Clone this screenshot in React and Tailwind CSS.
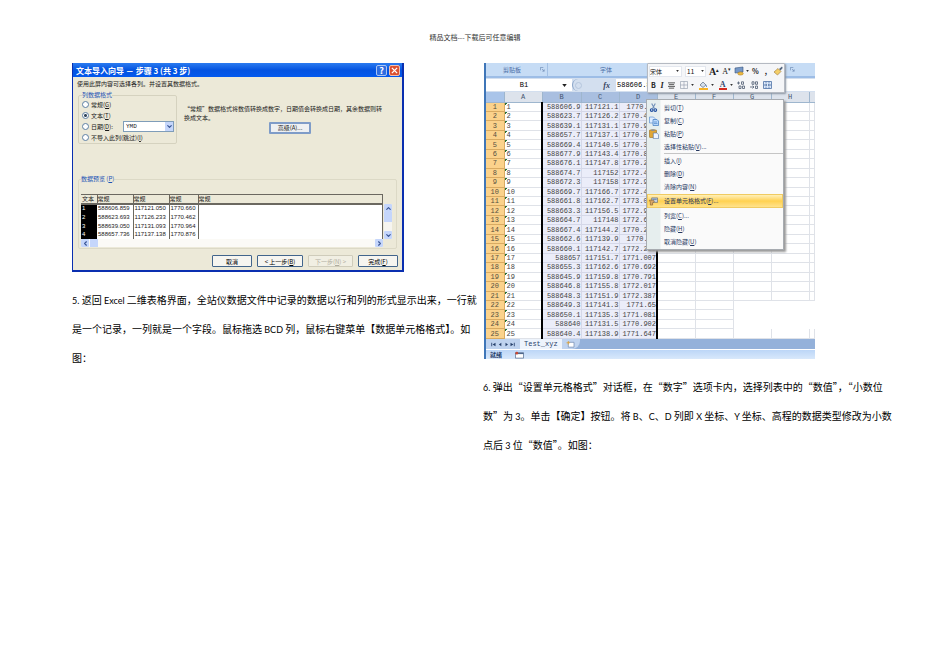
import { ChevronDown, ChevronLeft, ChevronRight, ChevronUp } from "lucide-react";

const SHEET_ROWS = [
  ["588606.9", "117121.1", "1770.66"],
  ["588623.7", "117126.2", "1770.462"],
  ["588639.1", "117131.1", "1770.964"],
  ["588657.7", "117137.1", "1770.876"],
  ["588669.4", "117140.5", "1770.325"],
  ["588677.9", "117143.4", "1770.811"],
  ["588676.1", "117147.8", "1770.256"],
  ["588674.7", "117152", "1772.417"],
  ["588672.3", "117158", "1772.932"],
  ["588669.7", "117166.7", "1772.408"],
  ["588661.8", "117162.7", "1773.051"],
  ["588663.3", "117156.5", "1772.914"],
  ["588664.7", "117148", "1772.637"],
  ["588667.4", "117144.2", "1770.218"],
  ["588662.6", "117139.9", "1770.35"],
  ["588660.1", "117142.7", "1772.266"],
  ["588657", "117151.7", "1771.007"],
  ["588655.3", "117162.6", "1770.692"],
  ["588645.9", "117159.8", "1770.791"],
  ["588646.8", "117155.8", "1772.017"],
  ["588648.3", "117151.9", "1772.387"],
  ["588649.3", "117141.3", "1771.65"],
  ["588650.1", "117135.3", "1771.081"],
  ["588640", "117131.5", "1770.902"],
  ["588640.4", "117138.9", "1771.647"],
];

const PREVIEW_ROWS = [
  ["588606.859", "117121.050", "1770.660"],
  ["588623.693", "117126.233", "1770.462"],
  ["588639.050", "117131.093", "1770.964"],
  ["588657.736", "117137.138", "1770.876"],
];

const MENU_ITEMS = [
  { label: "剪切", hotkey: "T", icon: "cut" },
  { label: "复制", hotkey: "C", icon: "copy" },
  { label: "粘贴", hotkey: "P", icon: "paste" },
  { label: "选择性粘贴", hotkey: "V", more: true },
  { label: "插入", hotkey: "I", divider: true },
  { label: "删除", hotkey: "D" },
  { label: "清除内容", hotkey: "N" },
  { label: "设置单元格格式", hotkey: "F", more: true, icon: "format", active: true },
  { label: "列宽", hotkey: "C", more: true },
  { label: "隐藏", hotkey: "H" },
  { label: "取消隐藏", hotkey: "U" },
];

function Latin({ children }) {
  return <span className="font-[Lato,sans-serif] text-[9px]">{children}</span>;
}

function Hotkey({ children }) {
  return (
    <span>
      (<u>{children}</u>)
    </span>
  );
}

function MenuIcon({ name }) {
  if (name === "cut") {
    return (
      <svg viewBox="0 0 10 10" className="size-[9px]" fill="none">
        <path d="M3 .5 6 6.2M7 .5 4 6.2" stroke="#6f8fb8" strokeWidth="1.2" />
        <circle cx="3" cy="7.8" r="1.5" stroke="#1f4fa0" strokeWidth="1.2" />
        <circle cx="7" cy="7.8" r="1.5" stroke="#1f4fa0" strokeWidth="1.2" />
      </svg>
    );
  }
  if (name === "copy") {
    return (
      <svg viewBox="0 0 10 10" className="size-[10px]">
        <path d="M.5 1h4l1.5 1.5V7H.5z" fill="#dcecff" stroke="#5b8fd0" strokeWidth=".7" />
        <path d="M4 3.5h4L9.500 5v4.500H4z" fill="#b9d8fb" stroke="#3c78c0" strokeWidth=".7" />
        <path d="M5 6h3M5 7.500h3.500" stroke="#3c78c0" strokeWidth=".6" />
      </svg>
    );
  }
  if (name === "paste") {
    return (
      <svg viewBox="0 0 10 10" className="size-[10px]">
        <rect x=".5" y="1" width="7" height="7.500" rx=".6" fill="#e0a637" stroke="#9a6b1c" strokeWidth=".6" />
        <rect x="2.300" y=".3" width="3.400" height="1.700" fill="#8d8d8d" />
        <path d="M4.300 4h3.500L9.500 5.600v4H4.300z" fill="#eef4ff" stroke="#4d6fa5" strokeWidth=".6" />
      </svg>
    );
  }
  if (name === "format") {
    return (
      <svg viewBox="0 0 10 10" className="size-[9px]">
        <path d="M3 1h6.500v5H3z" fill="#c7d3e3" stroke="#5b6470" strokeWidth=".7" />
        <path d="M4 2.500h4.500" stroke="#54779f" strokeWidth="1" />
        <path d="M.5 3.500h4.500L6 5 4 6.500V9H1.500V6z" fill="#d9a765" stroke="#755028" strokeWidth=".6" />
      </svg>
    );
  }
  return null;
}

function RadioRow({ id, label, hotkey, suffix, defaultChecked }) {
  return (
    <div className="flex h-[11px] items-center gap-[2px]">
      <input
        id={id}
        type="radio"
        name="column-format"
        defaultChecked={defaultChecked}
        className="size-[7px] shrink-0 appearance-none rounded-full border border-[#5d7fa3] bg-white checked:bg-[radial-gradient(circle,#33475c_0_1px,#fff_2px)]"
      />
      <label htmlFor={id} className="whitespace-nowrap">
        {label}
        <Hotkey>{hotkey}</Hotkey>
        {suffix}
      </label>
    </div>
  );
}

function ScrollButton({ label, children }) {
  return (
    <button
      type="button"
      aria-label={label}
      className="flex size-[8px] items-center justify-center rounded-[1px] bg-[#c5d6fb] text-[#3a5694]"
    >
      {children}
    </button>
  );
}

function DialogButton({ disabled, className, children }) {
  const tone = disabled
    ? "border-[#cfccbb] bg-[#f1efe3] text-[#b0ad9e]"
    : "border-[#42658c] bg-[#f6f5f0] text-black";
  return (
    <button
      type="button"
      disabled={disabled}
      className={`h-[12px] whitespace-nowrap rounded-[1px] border leading-[9px] ${tone} ${className}`}
    >
      {children}
    </button>
  );
}

function ImportWizard() {
  return (
    <section className="w-full max-w-[332px] border-b-2 border-l border-r-2 border-[#0a2fb0] bg-[#ece9d8] font-['Noto_Sans_CJK_SC',sans-serif] text-[6px] leading-[7px] text-[#1a1a1a]">
      <header className="flex h-[14px] items-center justify-between bg-linear-to-b from-[#2a7bf0] via-[#0453e0] to-[#0359ee] pl-[3px] pr-[2px] text-white">
        <h2 className="text-[8px] font-bold">文本导入向导 － 步骤 3 (共 3 步)</h2>
        <div className="flex gap-[2px]">
          <button type="button" aria-label="帮助" className="flex size-[11px] items-center justify-center rounded-[2px] border border-[#a9c5f5] bg-[#2f6de0] text-[9px] font-bold">
            ?
          </button>
          <button type="button" aria-label="关闭" className="flex size-[11px] items-center justify-center rounded-[2px] border border-[#f0c0b0] bg-[#dc5030]">
            <svg viewBox="0 0 8 8" className="size-[7px]" stroke="white" strokeWidth="1.500">
              <path d="M1 1l6 6M7 1L1 7" />
            </svg>
          </button>
        </div>
      </header>

      <p className="px-[4px] pt-[3px] pb-[4px]">使用此屏内容可选择各列。并设置其数据格式。</p>

      <div className="flex gap-[7px] pl-[5px]">
        <fieldset className="w-[99px] shrink-0 rounded-[2px] border border-[#d5d2bf] pl-[3px]">
          <legend className="leading-[8px] text-[#1c53b5]">列数据格式</legend>
          <RadioRow id="fmt-general" label="常规" hotkey="G" />
          <RadioRow id="fmt-text" label="文本" hotkey="T" defaultChecked />
          <div className="flex items-center justify-between pr-[2px]">
            <RadioRow id="fmt-date" label="日期" hotkey="D" suffix=":" />
            <div className="relative">
              <select
                aria-label="日期格式"
                className="block h-[11px] w-[51px] appearance-none border border-[#7f9db9] bg-white pl-[2px] font-['Liberation_Mono',monospace] text-[6px] leading-[9px]"
              >
                <option>YMD</option>
              </select>
              <span className="pointer-events-none absolute top-px right-px flex h-[9px] w-[8px] items-center justify-center bg-[#c5d6fb] text-[#3a5694]">
                <ChevronDown className="size-[7px]" strokeWidth={4} />
              </span>
            </div>
          </div>
          <RadioRow id="fmt-skip" label="不导入此列(跳过)" hotkey="I" />
        </fieldset>
        <div className="pt-[13px]">
          <p className="leading-[9px]">
            “常规”数据格式将数值转换成数字，日期值会转换成日期，其余数据则转
            <br />
            换成文本。
          </p>
          <button type="button" className="ml-[85px] block h-[12px] w-[42px] rounded-[1px] border-2 border-[#7f9cc8] bg-[#eef0f2] leading-[8px]">
            高级(A)...
          </button>
        </div>
      </div>

      <fieldset className="mx-[5px] mt-[31px] rounded-[2px] border border-[#dcd9c6] px-[2px] pb-[1px]">
        <legend className="leading-[8px] text-[#1c53b5]">
          数据预览 <Hotkey>P</Hotkey>
        </legend>
        <div className="mt-[11px] flex">
          <table className="h-[45px] flex-1 table-fixed border-collapse border-r border-[#6b6860] bg-white text-left">
            <colgroup>
              <col className="w-[16px]" />
              <col className="w-[36px]" />
              <col className="w-[36px]" />
              <col className="w-[29px]" />
              <col />
            </colgroup>
            <thead>
              <tr className="h-[9px] border-t border-b-2 border-[#6b6860] bg-[#ece9d8]">
                <th className="p-0 pl-px font-normal">文本</th>
                <th className="border-l border-[#6b6860] p-0 font-normal">常规</th>
                <th className="border-l border-[#6b6860] p-0 font-normal">常规</th>
                <th className="border-l border-[#6b6860] p-0 font-normal">常规</th>
                <th className="border-l border-[#6b6860] p-0 font-normal">常规</th>
              </tr>
            </thead>
            <tbody className="font-['Liberation_Sans',sans-serif]">
              {PREVIEW_ROWS.map((row, i) => (
                <tr key={row[0]}>
                  <td className="bg-black p-0 pl-px text-white">{i + 1}</td>
                  {row.map((value) => (
                    <td key={value} className="border-r border-[#6b6860] p-0 pl-px">
                      {value}
                    </td>
                  ))}
                  <td className="p-0" />
                </tr>
              ))}
            </tbody>
          </table>
          <div className="mt-[10px] mr-[2px] ml-px flex flex-col justify-between bg-[#f6f5f0]">
            <ScrollButton label="向上">
              <ChevronUp className="size-[7px]" strokeWidth={4} />
            </ScrollButton>
            <div className="mb-auto h-[10px] w-[8px] bg-[#c5d6fb]" />
            <ScrollButton label="向下">
              <ChevronDown className="size-[7px]" strokeWidth={4} />
            </ScrollButton>
          </div>
        </div>
        <div className="mr-[11px] flex bg-[#fbfaf6]">
          <ScrollButton label="向左">
            <ChevronLeft className="size-[7px]" strokeWidth={4} />
          </ScrollButton>
          <div className="mr-auto ml-px size-[8px] bg-[#c5d6fb]" />
          <ScrollButton label="向右">
            <ChevronRight className="size-[7px]" strokeWidth={4} />
          </ScrollButton>
        </div>
      </fieldset>

      <footer className="flex justify-end gap-[5px] px-[4px] pt-[6px] pb-[3px]">
        <DialogButton className="w-[40px]">取消</DialogButton>
        <DialogButton className="w-[46px]">
          &lt; 上一步<Hotkey>B</Hotkey>
        </DialogButton>
        <DialogButton disabled className="w-[45px]">
          下一步<Hotkey>N</Hotkey> &gt;
        </DialogButton>
        <DialogButton className="w-[40px]">
          完成<Hotkey>F</Hotkey>
        </DialogButton>
      </footer>
    </section>
  );
}

function Caret() {
  return (
    <svg viewBox="0 0 4 3" className="h-[2px] w-[3px]">
      <path d="M0 0h4L2 3z" fill="#333" />
    </svg>
  );
}

function MiniToolbar() {
  return (
    <div className="absolute top-0 left-[161px] w-[138px] rounded-[1px] border border-[#b5bac2] bg-[#f5f6f8] px-px text-[7px] leading-[9px] text-[#222] shadow-[1px_1px_2px_#8a93a0]">
      <div className="flex h-[14px] items-center gap-[3px]">
        <button type="button" className="flex h-[11px] w-[34px] items-center justify-between border border-[#e3e7ee] bg-white pr-[2px] text-[6px]">
          宋体
          <Caret />
        </button>
        <button type="button" className="flex h-[11px] w-[22px] items-center justify-between border border-[#e3e7ee] bg-white px-px">
          11
          <Caret />
        </button>
        <button type="button" aria-label="增大字号" className="font-['Liberation_Serif',serif] text-[10px] font-bold">A<sup className="text-[5px]">▴</sup></button>
        <button type="button" aria-label="减小字号" className="font-['Liberation_Serif',serif] text-[8px]">A<sup className="text-[5px]">▾</sup></button>
        <button type="button" aria-label="会计数字格式" className="flex items-center gap-[2px]">
          <svg viewBox="0 0 10 10" className="size-[10px]">
            <path d="M1 2l8-1v5l-8 1z" fill="#7698c7" stroke="#35547e" strokeWidth=".6" />
            <ellipse cx="6.500" cy="7.500" rx="2.800" ry="1.600" fill="#edba3f" stroke="#a97713" strokeWidth=".5" />
          </svg>
          <Caret />
        </button>
        <button type="button" className="font-bold">%</button>
        <button type="button" className="px-[3px] font-bold">,</button>
        <button type="button" aria-label="格式刷">
          <svg viewBox="0 0 10 10" className="size-[10px]">
            <path d="M6 3l3-2.500L9.700 2 7.500 4.500z" fill="#536781" />
            <path d="M1 6l4-3.500L8 5.500 4.500 9z" fill="#f4cf69" stroke="#987638" strokeWidth=".6" />
          </svg>
        </button>
      </div>
      <div className="flex h-[14px] items-center justify-between pr-[11px] pl-[2px]">
        <button type="button" className="font-bold">B</button>
        <button type="button" className="font-['Liberation_Serif',serif] text-[8px] font-bold italic">I</button>
        <button type="button" aria-label="居中">
          <svg viewBox="0 0 8 8" className="size-[7px]" stroke="#444">
            <path d="M0 1h8M1 3h6M0 5h8M1 7h6" />
          </svg>
        </button>
        <button type="button" aria-label="边框" className="flex items-center gap-[3px]">
          <svg viewBox="0 0 8 8" className="size-[8px]" fill="none" stroke="#8d98a7" strokeWidth=".6">
            <path d="M.5.5h7v7h-7zM4 .5v7M.5 4h7" />
          </svg>
          <Caret />
        </button>
        <button type="button" aria-label="填充颜色" className="flex items-center gap-[3px]">
          <svg viewBox="0 0 9 9" className="size-[9px]">
            <path d="M1 4l3-3 3 3-3 2.500z" fill="#d5dfec" stroke="#5b6b80" strokeWidth=".7" />
            <path d="M7 3.500l1 2-1 .5z" fill="#3568ae" />
            <path d="M0 7h9v2H0z" fill="#f5b226" />
          </svg>
          <Caret />
        </button>
        <button type="button" aria-label="字体颜色" className="flex items-center gap-[3px]">
          <span className="border-b-2 border-[#d42a1e] px-px font-['Liberation_Serif',serif] text-[8px] leading-[7px] font-bold text-[#334a70]">A</span>
          <Caret />
        </button>
        <button type="button" aria-label="增加小数位数">
          <svg viewBox="0 0 8 8" className="size-[8px]" fill="none" stroke="#4d5b70" strokeWidth=".8">
            <path d="M0 2h3M1.500.5v3M4.500.8h2v2.500h-2zM2 5h2v2.500H2zM5.500 5h2v2.500h-2z" />
          </svg>
        </button>
        <button type="button" aria-label="减少小数位数">
          <svg viewBox="0 0 8 8" className="size-[8px]" fill="none" stroke="#4d5b70" strokeWidth=".8">
            <path d="M2 .8h2v2.500H2zM5.500.8h2v2.500h-2zM0 6h3.500M2.500 4.700L4 6 2.500 7.500M5.500 5h2v2.500h-2z" />
          </svg>
        </button>
        <button type="button" aria-label="合并单元格">
          <svg viewBox="0 0 9 8" className="h-[8px] w-[9px]">
            <path d="M.5.5h8v7h-8z" fill="#dce9fa" stroke="#4c71a6" strokeWidth=".8" />
            <path d="M3 .5v2M6 .5v2M3 5.500v2M6 5.500v2" stroke="#4c71a6" strokeWidth=".7" />
            <path d="M1 4h2.500M8 4H5.500M2.800 3l1 1-1 1M6.200 3l-1 1 1 1" fill="none" stroke="#2f568f" strokeWidth=".7" />
          </svg>
        </button>
      </div>
    </div>
  );
}

function ContextMenu() {
  return (
    <ul
      role="menu"
      className="absolute top-[36px] left-[160px] w-[138px] border border-[#a7abb0] bg-[linear-gradient(to_right,#e6eeee_0_13px,#fafafa_14px)] py-[1px] text-[6px] leading-[12px] text-[#26375f] shadow-[2px_2px_2px_#9a9a9a]"
    >
      {MENU_ITEMS.map((item) => (
        <li key={item.label} role="none">
          {item.divider && <hr className="ml-[17px] border-[#c5c5c5]" />}
          <button
            type="button"
            role="menuitem"
            className={`flex w-full items-center gap-[5px] text-left ${
              item.active
                ? "my-px border border-[#f0cb62] bg-linear-to-b from-[#fff0b8] via-[#ffd14e] to-[#ffe28a]"
                : "h-[13px] border border-transparent"
            }`}
          >
            <span className="flex w-[11px] shrink-0 justify-center">
              <MenuIcon name={item.icon} />
            </span>
            <span>
              {item.label}
              <Hotkey>{item.hotkey}</Hotkey>
              {item.more && "..."}
            </span>
          </button>
        </li>
      ))}
    </ul>
  );
}

function Sheet() {
  return (
    <table className="h-[247px] w-full table-fixed border-collapse bg-white font-['Liberation_Mono',monospace] text-[7px] leading-[8px] text-[#444]">
      <colgroup>
        <col className="w-[18px]" />
        <col className="w-[38px]" />
        <col className="w-[39px]" />
        <col className="w-[38px]" />
        <col className="w-[38px]" />
        <col className="w-[38px]" />
        <col className="w-[38px]" />
        <col className="w-[38px]" />
        <col className="w-[38px]" />
        <col />
      </colgroup>
      <thead>
        <tr className="h-[10px] bg-[#dde3ec] text-[#44546f]">
          <th className="border-r border-b border-[#9eb6ce] bg-[#a9c4e9] p-0" />
          {["A", "B", "C", "D", "E", "F", "G", "H"].map((name) => (
            <th
              key={name}
              className={`border-r border-b border-[#9eb6ce] p-0 font-normal ${
                "BCD".includes(name) ? "bg-[#a9bfe0]" : ""
              }`}
            >
              {name}
            </th>
          ))}
          <th className="border-b border-[#9eb6ce] p-0" />
        </tr>
      </thead>
      <tbody>
        {SHEET_ROWS.map((row, i) => {
          const blank = i > 20 && i < 24 ? "p-0" : "border-r border-b border-[#dfe2e8] p-0";
          return (
            <tr key={row[0]}>
              <th className="border-r border-b border-[#d9ab62] bg-[#fbd28b] p-0 font-normal text-[#55503f]">{i + 1}</th>
              <td className="border-b border-[#dfe2e8] bg-[linear-gradient(135deg,#287038_0_2px,transparent_2px)] bg-no-repeat p-0 pl-[2px]">
                {i + 1}
              </td>
              <td className="border-r border-b border-l-2 border-[#d5d8e8] border-l-black bg-[#ebedf9] p-0 text-right">{row[0]}</td>
              <td className="border-r border-b border-[#d5d8e8] bg-[#ebedf9] p-0 text-right">{row[1]}</td>
              <td className="border-r-2 border-b border-[#d5d8e8] border-r-black bg-[#ebedf9] p-0 text-right">{row[2]}</td>
              <td className="border-r border-b border-[#dfe2e8] p-0" />
              <td className="border-r border-b border-[#dfe2e8] p-0" />
              <td className={blank} />
              <td className={blank} />
              <td className={blank} />
            </tr>
          );
        })}
      </tbody>
    </table>
  );
}

function ExcelWindow() {
  return (
    <section className="relative ml-px w-full max-w-[331px] border-l-2 border-[#3f76b8] font-['Noto_Sans_CJK_SC',sans-serif] text-[6px] leading-[9px]">
      <div className="flex h-[15px] items-center border-b-2 border-[#9dbde6] bg-[#c6dcf5] text-[#4a6da5]">
        <div className="flex h-full w-[62px] items-center justify-between border-r border-[#a3c0e4] pr-[2px] pl-[17px]">
          剪贴板
          <svg viewBox="0 0 6 6" className="size-[5px]" fill="none" stroke="#7895bd">
            <path d="M.5 4V.5H4M2.500 2.500L5 5M5 2.800V5H2.800" />
          </svg>
        </div>
        <div className="flex-1 pl-[52px]">字体</div>
        <svg viewBox="0 0 6 6" className="mr-[20px] size-[5px]" fill="none" stroke="#7895bd">
          <path d="M.5 4V.5H4M2.500 2.500L5 5M5 2.800V5H2.800" />
        </svg>
      </div>

      <div className="flex h-[14px] items-center bg-[#d3dfef] font-['Liberation_Mono',monospace] text-[7px]">
        <div className="flex h-[12px] w-[86px] items-center bg-white">
          <input aria-label="名称框" defaultValue="B1" className="w-[76px] text-center" />
          <svg viewBox="0 0 6 4" className="h-[3px] w-[5px]">
            <path d="M0 0h6L3 4z" fill="#222" />
          </svg>
        </div>
        <div className="flex h-[12px] w-[44px] items-center justify-between rounded-l-full border-l border-[#8ba6c9] pr-[6px] pl-[2px]">
          <span className="size-[7px] rounded-full border border-[#b5c6dd]" />
          <span className="font-['Liberation_Serif',serif] text-[8px] font-bold text-[#33435e] italic">fx</span>
        </div>
        <input aria-label="编辑栏" defaultValue="588606.859" className="h-[12px] min-w-0 flex-1 bg-white pl-px" />
      </div>

      <Sheet />

      <div className="flex h-[10px] items-center bg-[#94b1da] text-[#27406b]">
        <div className="flex h-full w-[34px] items-center justify-around bg-[#bfd3ef] px-[2px]">
          <svg viewBox="0 0 28 6" className="h-[5px] w-[28px]" fill="#27406b">
            <path d="M0 1h1v4H0zM5 1v4L1.500 3zM12 1v4L9 3zM17 1v4l3-2zM23 1v4l3.500-2zM27 1h1v4h-1z" />
          </svg>
        </div>
        <button type="button" className="h-full bg-[#eef4fc] px-[4px] font-['Liberation_Mono',monospace] text-[7px]">
          Test_xyz
        </button>
        <button type="button" aria-label="插入工作表" className="flex h-full w-[18px] items-center justify-center rounded-br-[8px] bg-[#bfd3ef]">
          <svg viewBox="0 0 10 8" className="h-[7px] w-[9px]">
            <path d="M2.500 1.500h6.500v5.500H2.500z" fill="#fff" stroke="#6d88b0" strokeWidth=".8" />
            <path d="M2.500 0v4M.5 2h4" stroke="#dfa53b" />
          </svg>
        </button>
      </div>
      <div className="flex h-[10px] items-center gap-[13px] border-t border-white bg-linear-to-b from-[#bcd6f7] to-[#d8e8fb] pl-[4px] font-bold text-[#27406b]">
        就绪
        <svg viewBox="0 0 10 8" className="h-[8px] w-[9px]">
          <path d="M.5 1.500h9v6h-9z" fill="#fff" stroke="#4e678c" strokeWidth=".8" />
          <path d="M.5 1.500h9v1.500h-9z" fill="#4e678c" />
          <circle cx="2" cy="2" r="1.500" fill="#c94833" />
        </svg>
      </div>

      <ContextMenu />
      <MiniToolbar />
    </section>
  );
}

export default function App() {
  return (
    <main className="min-h-screen bg-white font-['Noto_Sans_CJK_SC',sans-serif] text-black">
      <header className="pt-[33px] text-center font-['Liberation_Serif','Noto_Sans_CJK_SC',serif] text-[7px] leading-[10px] text-[#333]">
        精品文档---下载后可任意编辑
      </header>
      <div className="grid grid-cols-2 gap-6 pt-[20px] pr-[80px] pl-[72px]">
        <article>
          <ImportWizard />
          <p className="mt-[14px] text-[10px] leading-[28px] whitespace-nowrap">
            <Latin>5. </Latin>返回<Latin> Excel </Latin>二维表格界面，全站仪数据文件中记录的数据以行和列的形式显示出来，一行就
            <br />
            是一个记录，一列就是一个字段。鼠标拖选<Latin> BCD </Latin>列，鼠标右键菜单【数据单元格格式】。如
            <br />
            图：
          </p>
        </article>
        <article>
          <ExcelWindow />
          <p className="mt-[14px] text-[10px] leading-[28px] whitespace-nowrap">
            <Latin>6. </Latin>弹出“设置单元格格式”对话框，在“数字”选项卡内，选择列表中的“数值”，“小数位
            <br />
            数”为<Latin> 3</Latin>。单击【确定】按钮。将<Latin> B</Latin>、<Latin>C</Latin>、<Latin>D </Latin>列即<Latin> X </Latin>坐标、<Latin>Y </Latin>坐标、高程的数据类型修改为小数
            <br />
            点后<Latin> 3 </Latin>位“数值”。如图：
          </p>
        </article>
      </div>
    </main>
  );
}
